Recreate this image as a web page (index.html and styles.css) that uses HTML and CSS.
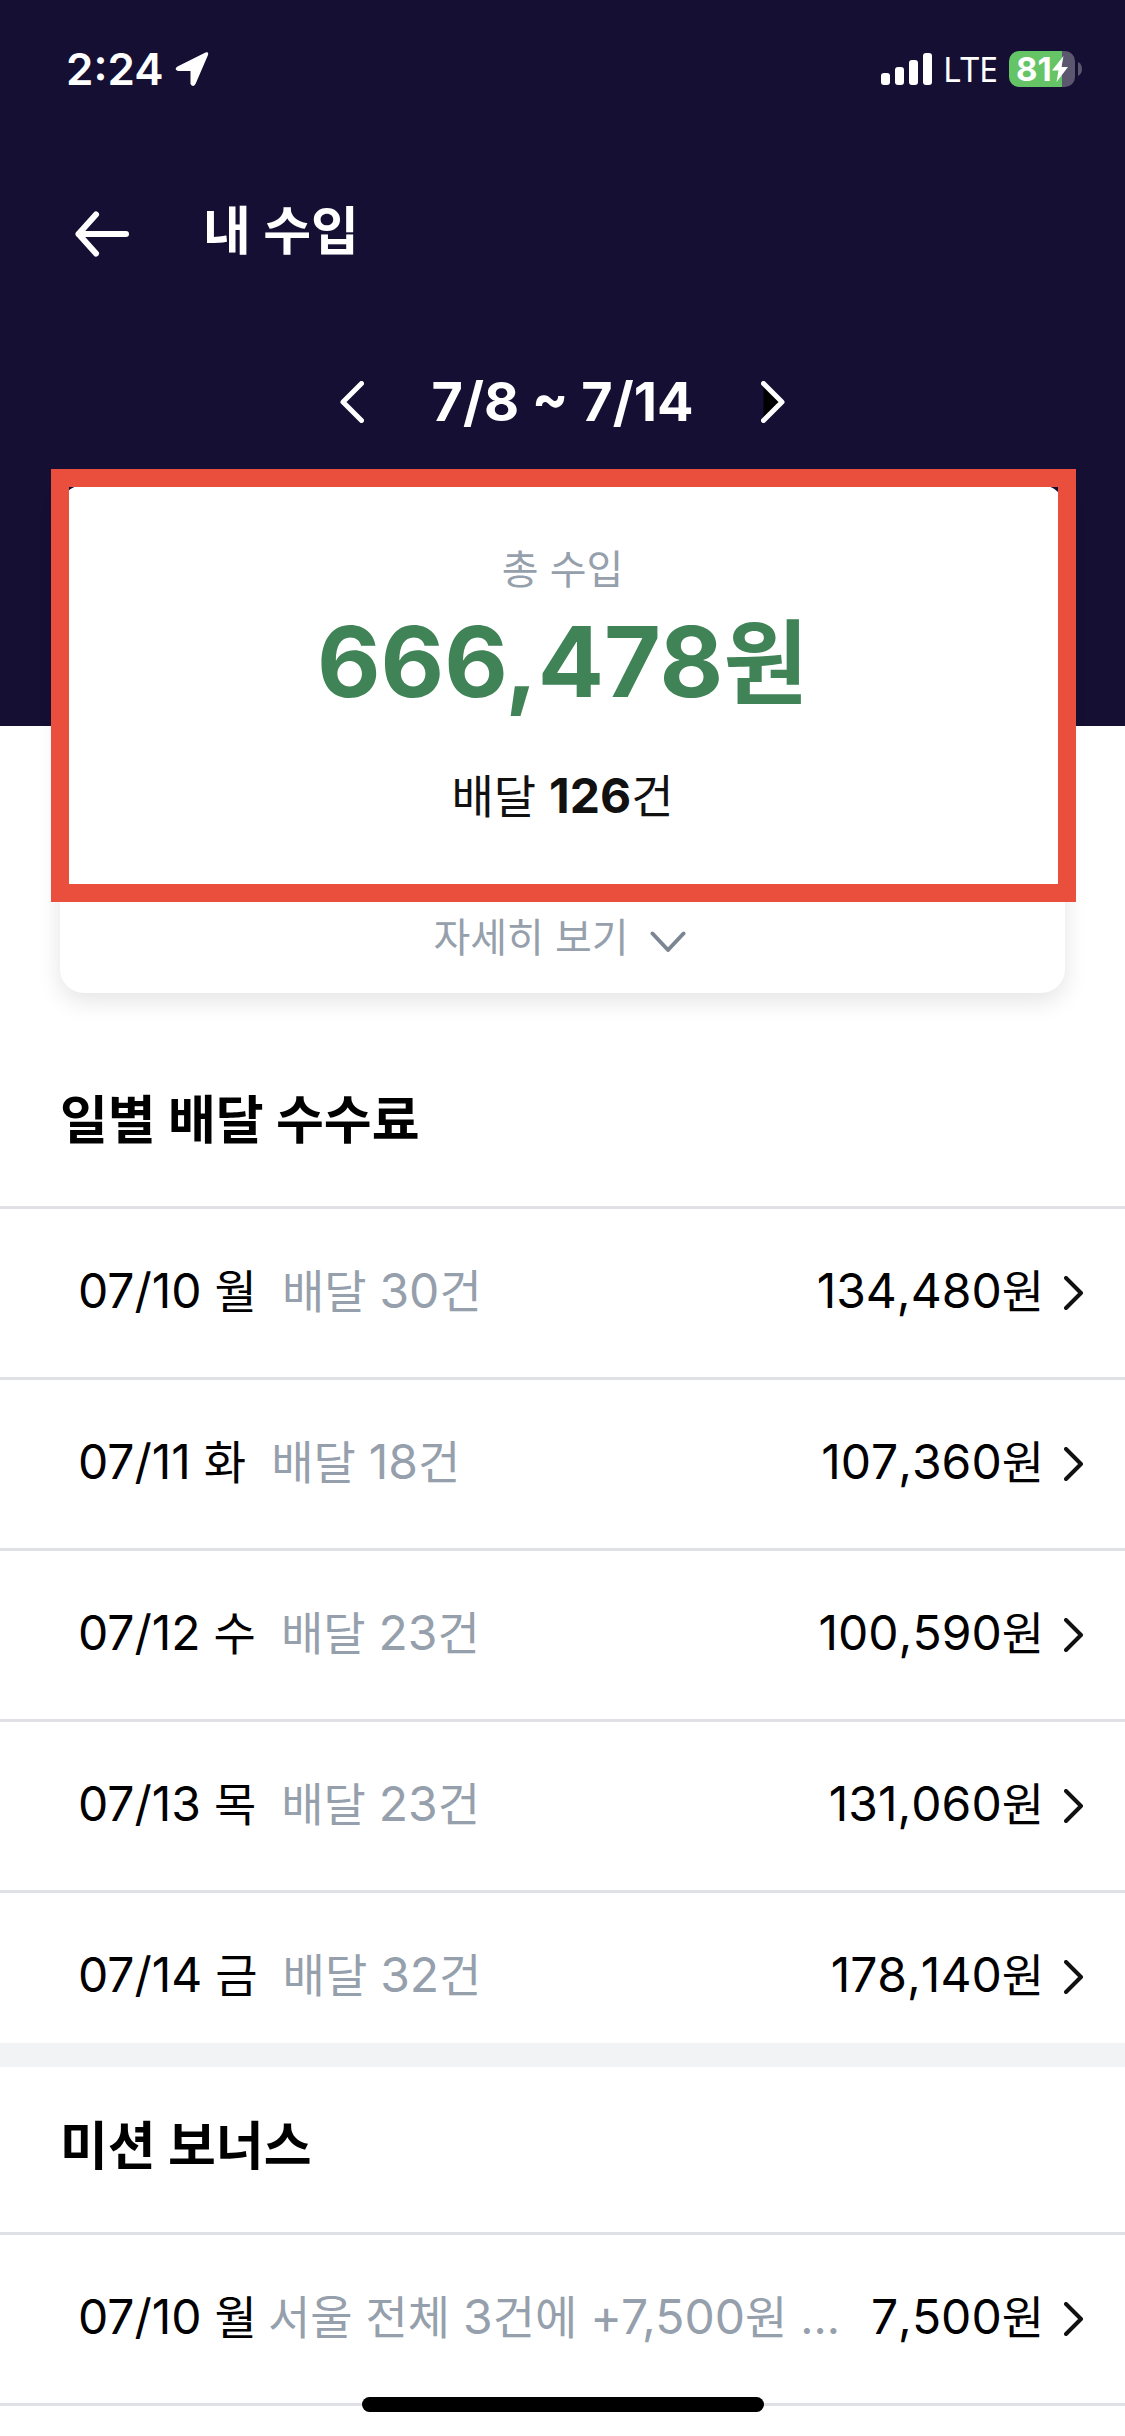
FILE: index.html
```html
<!DOCTYPE html>
<html lang="ko">
<head>
<meta charset="utf-8">
<meta name="viewport" content="width=device-width, initial-scale=1">
<title>내 수입</title>
<link rel="stylesheet" href="styles.css">
</head>
<body>
<svg class="defs" aria-hidden="true">
  <symbol id="chevron-right" viewBox="0 0 20 34"><path d="M2 2 17 17 2 32" fill="none" stroke="#111" stroke-width="4" stroke-linecap="round" stroke-linejoin="round"/></symbol>
</svg>

<header class="top">
  <div class="status">
    <div class="status-side">
      <span class="clock">2:24</span>
      <svg class="location" viewBox="0 0 34 36" aria-hidden="true"><path d="M2.500 15.500 30.500 1.500Q34 .5 33 4L20.500 33Q18 37 15.500 33V20H3Q-1.500 18.500 2.500 15.500Z" fill="#fff"/></svg>
    </div>
    <div class="status-side">
      <svg class="signal" viewBox="0 0 51 32" aria-hidden="true"><g fill="#fff"><rect y="20" width="9" height="12" rx="3"/><rect x="14" y="14" width="9" height="18" rx="3"/><rect x="28" y="7" width="9" height="25" rx="3"/><rect x="42" width="9" height="32" rx="3"/></g></svg>
      <span class="network">LTE</span>
      <div class="battery">
        <span class="battery-level">81</span>
        <svg class="bolt" viewBox="0 0 16 26" aria-hidden="true"><path d="M11.500 0 0 14.500H6.500L4.500 26 16 11H9.500Z" fill="#fff"/></svg>
      </div>
      <svg class="battery-tip" viewBox="0 0 4 14" aria-hidden="true"><path d="M0 0Q4 2 4 7T0 14Z" fill="#5b576f"/></svg>
    </div>
  </div>

  <div class="titlebar">
    <button class="icon-button" type="button" aria-label="뒤로"><svg width="54" height="46" viewBox="0 0 54 46"><path d="M21 3.500 3.500 23 21 42.500M3.500 23H51" fill="none" stroke="#fff" stroke-width="6" stroke-linecap="round" stroke-linejoin="round"/></svg></button>
    <h1 class="title">내 수입</h1>
  </div>

  <div class="period">
    <button class="icon-button" type="button" aria-label="이전 주"><svg width="24" height="42" viewBox="0 0 24 42"><path d="M21.500 2.500 3 21 21.500 39.500" fill="none" stroke="#fff" stroke-width="5" stroke-linecap="round" stroke-linejoin="round"/></svg></button>
    <span class="period-range">7/8 ~ 7/14</span>
    <button class="icon-button" type="button" aria-label="다음 주"><svg width="24" height="42" viewBox="0 0 24 42"><path d="M2.500 2.500 21 21 2.500 39.500" fill="#000" stroke="#fff" stroke-width="5" stroke-linecap="round" stroke-linejoin="round"/></svg></button>
  </div>
</header>

<main>
  <section class="card">
    <div class="summary">
      <p class="summary-label">총 수입</p>
      <p class="summary-total">666,478<span class="won">원</span></p>
      <p class="summary-count">배달 <strong class="num">126</strong>건</p>
    </div>
    <button class="more" type="button">자세히 보기 <svg width="36" height="22" viewBox="0 0 36 22" aria-hidden="true"><path d="M2.500 2.500 18 19 33.500 2.500" fill="none" stroke="#7c8693" stroke-width="4" stroke-linecap="round" stroke-linejoin="round"/></svg></button>
  </section>

  <section class="group">
    <h2 class="heading">일별 배달 수수료</h2>
    <ul class="list">
      <li><a class="row" href="#d0710"><span class="day"><span class="num">07/10</span> 월</span><span class="note">배달 <span class="num">30</span>건</span><span class="amount"><span class="num">134,480</span>원</span><svg class="go" aria-hidden="true"><use href="#chevron-right"/></svg></a></li>
      <li><a class="row" href="#d0711"><span class="day"><span class="num">07/11</span> 화</span><span class="note">배달 <span class="num">18</span>건</span><span class="amount"><span class="num">107,360</span>원</span><svg class="go" aria-hidden="true"><use href="#chevron-right"/></svg></a></li>
      <li><a class="row" href="#d0712"><span class="day"><span class="num">07/12</span> 수</span><span class="note">배달 <span class="num">23</span>건</span><span class="amount"><span class="num">100,590</span>원</span><svg class="go" aria-hidden="true"><use href="#chevron-right"/></svg></a></li>
      <li><a class="row" href="#d0713"><span class="day"><span class="num">07/13</span> 목</span><span class="note">배달 <span class="num">23</span>건</span><span class="amount"><span class="num">131,060</span>원</span><svg class="go" aria-hidden="true"><use href="#chevron-right"/></svg></a></li>
      <li><a class="row" href="#d0714"><span class="day"><span class="num">07/14</span> 금</span><span class="note">배달 <span class="num">32</span>건</span><span class="amount"><span class="num">178,140</span>원</span><svg class="go" aria-hidden="true"><use href="#chevron-right"/></svg></a></li>
    </ul>
  </section>

  <section class="group">
    <h2 class="heading">미션 보너스</h2>
    <ul class="list list-bonus">
      <li><a class="row" href="#m0710"><span class="day"><span class="num">07/10</span> 월</span><span class="note">서울 전체 <span class="num">3</span>건에 <span class="num">+7,500</span>원 ...</span><span class="amount"><span class="num">7,500</span>원</span><svg class="go" aria-hidden="true"><use href="#chevron-right"/></svg></a></li>
    </ul>
  </section>
</main>
<div class="home-indicator"></div>
</body>
</html>
```
FILE: styles.css
```css
*, *::after { box-sizing: border-box; }

body {
  margin: 0;
  min-height: 100vh;
  background: #fff;
  color: #000;
  font-family: Inter, "Noto Sans CJK KR", sans-serif;
  font-size: 46px;
}

h1, h2, p, ul { margin: 0; padding: 0; }
ul { list-style: none; }
svg { display: block; flex: none; }
.defs { display: none; }

button {
  border: 0;
  padding: 0;
  background: none;
  color: inherit;
  font: inherit;
}

/* Header */
.top {
  padding-bottom: 252px;
  background: #140f33;
  color: #fff;
}

.status {
  display: flex;
  justify-content: space-between;
  height: 138px;
  padding: 0 43px 0 66px;
}

.status-side {
  display: flex;
  align-items: center;
}

.clock { font-size: 44px; font-weight: 600; }
.location { width: 34px; height: 36px; margin-left: 12px; }
.signal { width: 51px; height: 32px; }
.network {
  margin: 0 11px;
  font-family: "Noto Sans", sans-serif;
  font-size: 34px;
}

.battery {
  display: flex;
  align-items: center;
  width: 66px;
  height: 36px;
  padding-left: 7px;
  border-radius: 10px;
  background: linear-gradient(to right, #65c466 81%, #5b576f 81%);
}

.battery-level { font-size: 33px; font-weight: 700; line-height: 36px; }
.bolt { width: 16px; height: 26px; }
.battery-tip { width: 4px; height: 14px; margin-left: 3px; }

.titlebar {
  display: flex;
  align-items: center;
  gap: 74px;
  height: 192px;
  padding-left: 75px;
}

.title { padding-bottom: 4px; font-size: 52px; font-weight: 700; line-height: 72px; }

.period {
  display: flex;
  align-items: center;
  justify-content: center;
  gap: 68px;
  height: 144px;
}

.period-range { font-size: 54px; font-weight: 700; line-height: 72px; }

/* Income card */
.card {
  position: relative;
  margin: -241px 60px 0;
  border-radius: 24px;
  background: #fff;
  box-shadow: 0 8px 24px rgba(0, 0, 0, 0.11);
  text-align: center;
}

.summary {
  height: 400px;
  padding-top: 53px;
}

.summary::after {
  content: "";
  position: absolute;
  top: -16px;
  left: -9px;
  right: -11px;
  height: 433px;
  border: 18px solid #ea4e3d;
}

.summary-label { color: #969fac; font-size: 40px; line-height: 64px; }
.summary-total { color: #408356; font-size: 98px; font-weight: 700; line-height: 120px; }
.won { font-size: 92px; }
.summary-count { margin-top: 40px; color: #111; line-height: 64px; }

.more {
  display: flex;
  align-items: center;
  justify-content: center;
  gap: 21px;
  width: 100%;
  height: 108px;
  padding: 0 6px 8px 0;
  color: #969fac;
  font-size: 40px;
}

.more svg { margin-top: 14px; }

/* Lists */
.heading {
  padding: 44px 60px 49px;
  font-size: 52px;
  font-weight: 700;
  line-height: 72px;
}

.card + .group { padding-top: 48px; }
.group + .group { border-top: 24px solid #f1f3f5; }

.row {
  display: flex;
  align-items: center;
  height: 171px;
  padding: 0 41px 0 78px;
  border-top: 3px solid #dfe1e6;
  color: inherit;
  text-decoration: none;
  line-height: 64px;
  white-space: nowrap;
}

.group:nth-child(2) li:last-child { height: 153px; }

.num { font-size: 48px; }
.day, .note, .amount { padding-bottom: 4px; }
.note { margin-left: 25px; color: #969fac; }
.list-bonus .note { margin-left: 11px; }
.list-bonus { border-bottom: 3px solid #dfe1e6; }
.amount { margin-left: auto; font-kerning: none; }
.go { width: 20px; height: 34px; margin-left: 20px; }

.home-indicator {
  position: fixed;
  bottom: 24px;
  left: 50%;
  width: 402px;
  height: 15px;
  margin-left: -201px;
  border-radius: 8px;
  background: #000;
}
```
